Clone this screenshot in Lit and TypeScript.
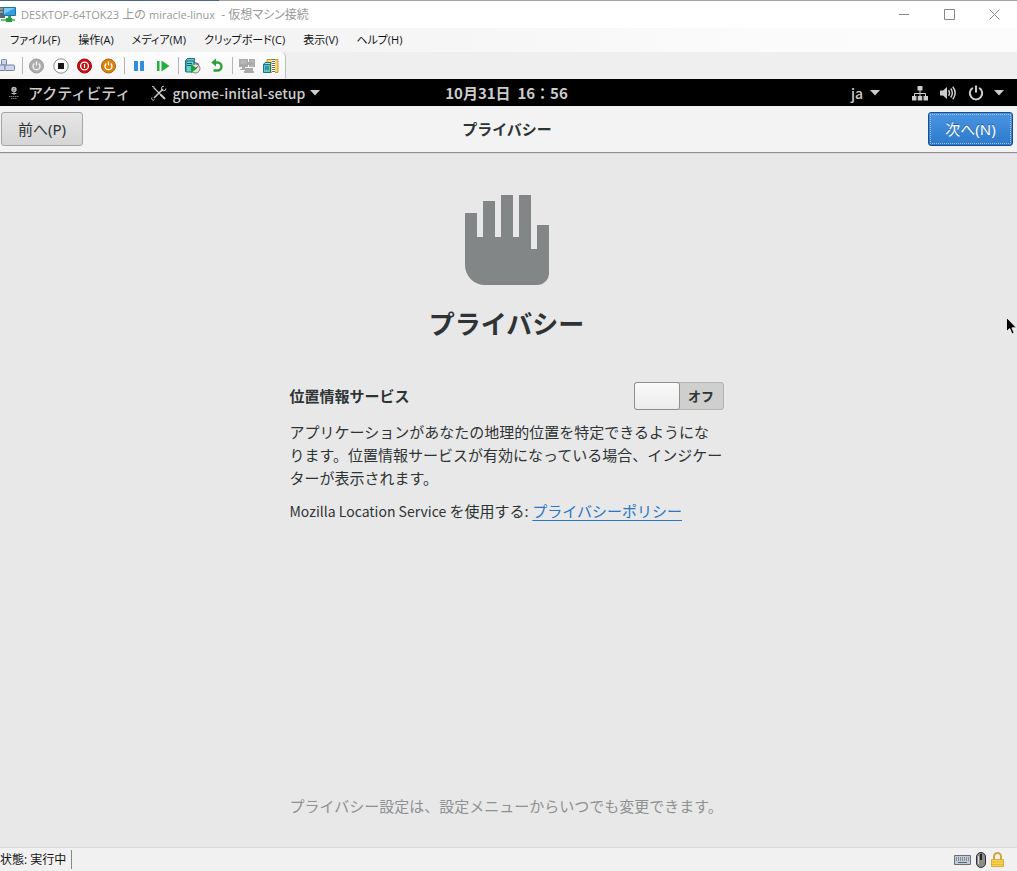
import { LitElement, html, css, svg } from "lit";
import { customElement, state } from "lit/decorators.js";

const caret = html`<svg class="caret" viewBox="0 0 10 6" width="10" height="6" aria-hidden="true"><path d="M0 0h10L5 5.5z" fill="currentColor"/></svg>`;

const icon = (body: unknown) =>
  html`<svg viewBox="0 0 16 16" width="16" height="16" aria-hidden="true">${body}</svg>`;

const icons = {
  keys: svg`<g fill="#cdd6ea" stroke="#7482a3"><rect x="1.500" y="1.500" width="5" height="5.500" rx="1"/><rect x="-1.500" y="7" width="6.500" height="5.500" rx="1"/><rect x="5" y="7" width="9.500" height="5.500" rx="1"/></g>`,
  start: svg`<circle cx="7.500" cy="8" r="7" fill="#adadad" stroke="#9b9b9b"/><path d="M5.300 5.500a3.500 3.500 0 1 0 4.400 0M7.500 3.500v4" fill="none" stroke="#f4f4f4" stroke-width="1.300"/>`,
  stop: svg`<circle cx="8" cy="8" r="7.200" fill="#fff" stroke="#8c8c8c"/><path d="M5 5h6v6H5z" fill="#161616"/>`,
  shut: svg`<circle cx="7.500" cy="8" r="7" fill="#c40f14" stroke="#9c0b0f"/><circle cx="7.500" cy="8" r="3.900" fill="none" stroke="#fff" stroke-width="1.300"/><path d="M7.500 6v4" stroke="#fff" stroke-width="1.200"/>`,
  save: svg`<circle cx="7.500" cy="8" r="7" fill="#dd8209" stroke="#a8640c"/><path d="M5.300 5.500a3.500 3.500 0 1 0 4.400 0M7.500 3.500v4" fill="none" stroke="#fff" stroke-width="1.300"/>`,
  pause: svg`<path d="M3 3h4v10H3zM9 3h4v10H9z" fill="#2f8ddb"/>`,
  resume: svg`<path d="M2 3h2.500v10H2zM6.500 2.500L14.500 8l-8 5.500z" fill="#22ae3c"/>`,
  checkpoint: svg`<path d="M.5 2.500l2-2h7v2l-1 11h-8z" fill="#5cc9d2" stroke="#21717d"/><path d="M1 3h8v11H1z" fill="#69d3da" stroke="#21717d"/><path d="M2 5.500h5M2 7.500h4" stroke="#14606c"/><circle cx="10.500" cy="10.500" r="4.500" fill="#e3e4de" stroke="#81847a"/><path d="M10 4.500l4 2" stroke="#666" stroke-width="1.300"/><path d="M6 6l6 4.500L6 15z" fill="#17a437"/><path d="M11 10l2.500-2" stroke="#555"/>`,
  revert: svg`<path d="M4 4.500h4.500a3.800 3.800 0 0 1 0 8H4.500" fill="none" stroke="#29a338" stroke-width="2.400"/><path d="M7 .5v8L2.200 4.500z" fill="#29a338"/>`,
  share: svg`<g fill="#a9a9a9"><path d="M0 1h9v8H0zM3 9h3v2H3zM1 11h7v1H1zM10 1h6v8h-6zM9 4h7v3H9zM6 10h8v3H6zM5 13h10v2H5z"/></g><path d="M1.500 3h6M1.500 5h6M11 3h4M11 8h4" stroke="#c4c4c4"/>`,
  session: svg`<path d="M4 1.500h11v13H4z" fill="#f5d66f" stroke="#c59b2e"/><path d="M10.500 1v14" stroke="#fff" stroke-width="3"/><path d="M10.500 1v14" stroke="#6c6c6c" stroke-width="3" stroke-dasharray="1 1"/><path d="M.5 6.500l1.500-2h6l-.5 2z" fill="#9be5ea" stroke="#21717d"/><path d="M.5 6.500h7v8h-7z" fill="#58c7d2" stroke="#21717d"/><path d="M2 9h4M2 11h4" stroke="#14606c"/>`,
};

const toolGroups: [string, keyof typeof icons][][] = [
  [["Ctrl+Alt+Del", "keys"]],
  [["起動", "start"], ["停止", "stop"], ["シャットダウン", "shut"], ["保存", "save"]],
  [["一時停止", "pause"], ["再開", "resume"]],
  [["チェックポイント", "checkpoint"], ["元に戻す", "revert"]],
  [["共有", "share"], ["拡張セッション", "session"]],
];

const menus = ["ファイル(F)", "操作(A)", "メディア(M)", "クリップボード(C)", "表示(V)", "ヘルプ(H)"];

@customElement("vm-chrome")
class VmChrome extends LitElement {
  static styles = css`
    :host { display: block; font: 12px/16px "Open Sans", "Noto Sans CJK JP", sans-serif; color: #111; background: #efefef; }
    button { border: 0; padding: 0; margin: 0; background: none; font: inherit; color: inherit; display: flex; align-items: center; justify-content: center; }
    .title { height: 28px; box-sizing: border-box; border-top: 1px solid #a0a0a0; border-image: linear-gradient(90deg, #4d6483 220px, #a0a0a0 220px) 1; background: #fff; display: flex; align-items: center; color: #999; }
    .logo { flex: none; margin-right: 4px; }
    .name { flex: 1; font-feature-settings: "palt"; white-space: nowrap; }
    .latin { font-size: 11px; }
    .win { width: 45px; height: 27px; color: #888; }
    .menu { height: 24px; display: flex; gap: 18px; padding-left: 10px; background: linear-gradient(90deg, #f0f0f0, #fcfcfc 860px); }
    .menu button { font-size: 11px; font-feature-settings: "palt"; white-space: nowrap; }
    .tools { width: max-content; height: 27px; display: flex; align-items: center; background: linear-gradient(#fdfdfd, #f5f5f5); border-right: 1px solid #bbb; border-radius: 0 5px 0 0; padding-right: 2px; }
    .tools button { width: 24px; height: 24px; }
    .tools .edge { width: 19px; justify-content: flex-start; }
    .group { display: flex; align-items: center; }
    .group + .group::before { content: ""; width: 1px; height: 17px; margin: 0 2px 0 3px; background: #b5b5b5; }
  `;
  render() {
    return html`
      <header class="title">
        <svg class="logo" viewBox="0 0 17 17" width="17" height="17" aria-hidden="true">
          <path d="M0 1h5v11H0z" fill="#5f6669"/><path d="M0 3h4M0 6h4" stroke="#c5d0d4"/>
          <path d="M3.500 1.500h12v8h-12z" fill="#2d9fe2" stroke="#287098"/><path d="M4 2h11L4 8z" fill="#79c9f2"/>
          <path d="M8 10h3v3H8z" fill="#2fa84a"/><path d="M1 13h14v2H1z" fill="#59cb70"/><path d="M6 12h6v4H6z" fill="#279b42"/>
        </svg>
        <span class="name"><span class="latin">DESKTOP-64TOK23</span> 上の <span class="latin">miracle-linux</span> &nbsp;- 仮想マシン接続</span>
        <button class="win" aria-label="最小化"><svg width="11" height="11"><path d="M0 5.500h10" stroke="currentColor"/></svg></button>
        <button class="win" aria-label="最大化"><svg width="11" height="11"><path d="M.5.5h10v10H.5z" fill="none" stroke="currentColor"/></svg></button>
        <button class="win" aria-label="閉じる"><svg width="11" height="11"><path d="M.5.5l10 10M10.500.5l-10 10" stroke="currentColor"/></svg></button>
      </header>
      <nav class="menu">${menus.map((m) => html`<button>${m}</button>`)}</nav>
      <div class="tools">
        ${toolGroups.map((g, i) => html`<div class="group">${g.map(([label, key]) => html`<button class=${i ? "" : "edge"} aria-label=${label}>${icon(icons[key])}</button>`)}</div>`)}
      </div>`;
  }
}

@customElement("shell-bar")
class ShellBar extends LitElement {
  static styles = css`
    :host { display: grid; grid-template-columns: 1fr auto 1fr; align-items: center; height: 27px; box-sizing: border-box; padding: 0 4px 0 0; background: #000; color: #ccc; font: 500 15px/24px "Noto Sans CJK JP", sans-serif; white-space: nowrap; }
    button { border: 0; padding: 0; margin: 0; background: none; font: inherit; color: inherit; display: flex; align-items: center; }
    svg { flex: none; }
    .left { display: flex; padding-left: 8px; gap: 21px; }
    .left .activities { gap: 8px; }
    .clock { font-weight: 700; }
    .left .app { gap: 5px; font-size: 14px; }
    .right { display: flex; justify-content: flex-end; padding-right: 9px; gap: 32px; }
    .right .lang { gap: 7px; font-size: 14px; }
    .right .system { gap: 12px; }
    .system .caret { margin-left: -2px; }
  `;
  render() {
    return html`
      <div class="left">
        <button class="activities">
          <svg viewBox="0 0 12 14" width="12" height="14" aria-hidden="true"><g fill="#bbb"><circle cx="6" cy="3.500" r="2.700"/><path d="M5.500 5h1v4h-1zM3.500 7h5v1h-5z"/></g><path d="M1 10.500h10M3 12.500h6" stroke="#777" stroke-dasharray="1.500 .5"/><path d="M5 3l2-1M5 5l2-1" stroke="#333" stroke-width=".6"/></svg>
          アクティビティ
        </button>
        <button class="app">
          <svg viewBox="0 0 16 16" width="16" height="16" aria-hidden="true"><path d="M2.500 2.500L10 10" stroke="#ccc" stroke-width="1.200"/><path d="M9.500 9.500l4.500 4.500" stroke="#ccc" stroke-width="2"/><path d="M12 4L3 13" stroke="#ccc" stroke-width="1.600"/><path d="M13 1.200a2.300 2.300 0 1 0 2 2.300M1 12.500a1.500 1.500 0 1 0 2.500 2M1 1.500l2.500.5" fill="none" stroke="#ccc"/></svg>
          gnome-initial-setup ${caret}
        </button>
      </div>
      <button class="clock">10月31日&nbsp; 16：56</button>
      <div class="right">
        <button class="lang">ja ${caret}</button>
        <button class="system" aria-label="システム">
          <svg viewBox="0 0 16 16" width="16" height="16" aria-hidden="true"><path d="M5.500 1h5v5h-5zM0 11h5v4.500H0zM5.500 11h5v4.500h-5zM11 11h5v4.500h-5z" fill="#000"/><path d="M5.500 1h5v4.500h-5zM0 11h4.500v4.500H0zM5.750 11h4.500v4.500h-4.500zM11.500 11H16v4.500h-4.500z" fill="#ccc"/><path d="M8 5v6M2.500 11V8.500h11V11" fill="none" stroke="#ccc"/></svg>
          <svg viewBox="0 0 16 16" width="16" height="16" aria-hidden="true"><path d="M0 5.500h3L7 2v12l-4-3.500H0z" fill="#ccc"/><path d="M8.500 5.300q2 2.700 0 5.400M10.700 3.500q3.300 4.500 0 9M12.800 1.800q4.700 6.200 0 12.400" fill="none" stroke="#ccc" stroke-width="1.500"/></svg>
          <svg viewBox="0 0 16 16" width="16" height="16" aria-hidden="true"><path d="M4.800 2.900a6.200 6.200 0 1 0 6.400 0M8 .5v7" fill="none" stroke="#ccc" stroke-width="2"/></svg>
          ${caret}
        </button>
      </div>`;
  }
}

@customElement("privacy-page")
class PrivacyPage extends LitElement {
  @state() private on = false;
  static styles = css`
    :host { display: flex; flex-direction: column; background: #e8e8e8; color: #2e3436; font: 15px/23px "Noto Sans", "Noto Sans CJK JP", sans-serif; }
    .bar { display: grid; grid-template-columns: 1fr auto 1fr; align-items: center; height: 47px; box-sizing: border-box; padding: 0 4px 0 1px; background: #f3f3f3; border-bottom: 1px solid #8f8f8f; box-shadow: 0 1px 0 #d8d8d8; }
    .bar h2 { margin: 0; font-size: 15px; font-weight: 700; line-height: 23px; }
    .nav { box-sizing: border-box; height: 34px; min-width: 82px; padding: 0 16px; border-radius: 3px; border: 1px solid #a5a5a5; background: linear-gradient(#e6e6e6, #d6d6d6); color: #2e3436; font: inherit; justify-self: start; }
    .nav.next { justify-self: end; min-width: 85px; color: #fff; border-color: #184f8c; background: linear-gradient(#4a94e2, #2d7acb); outline: 1px dotted #9dc3ea; outline-offset: -3px; text-shadow: 0 -1px #2460a0; }
    main { flex: 1; display: flex; flex-direction: column; align-items: center; padding: 42px 20px 29px 16px; }
    h1 { margin: 20px 0 39px; font-size: 26px; line-height: 38px; font-weight: 700; }
    .body { width: 434px; max-width: 100%; }
    .row { display: flex; justify-content: space-between; align-items: center; height: 28px; }
    .row label { font-weight: 700; }
    .switch { appearance: none; box-sizing: border-box; margin: 0; width: 90px; height: 28px; border: 1px solid #b4b4b2; border-radius: 3px; background: #cfcfcd; display: flex; align-items: center; font: 700 13px/20px "Noto Sans", "Noto Sans CJK JP", sans-serif; color: #2e3436; }
    .switch::before { content: ""; box-sizing: border-box; width: 46px; height: 28px; margin: -1px 0 -1px -1px; border: 1px solid #8f8f8f; border-radius: 3px; background: linear-gradient(#fafafa, #ececec); flex: none; }
    .switch::after { content: "オフ"; flex: 1; text-align: center; }
    .switch:checked { background: #4a90d9; flex-direction: row-reverse; }
    .switch:checked::after { content: "オン"; color: #fff; }
    p { margin: 11px 0 10px; white-space: nowrap; }
    p + p { margin: 0; }
    .latin { font-family: "Noto Sans CJK JP", sans-serif; font-size: 14px; }
    a { color: #2a76c6; text-decoration: underline; text-underline-offset: 3px; text-decoration-thickness: 1px; }
    .hint { margin-top: auto; width: 434px; max-width: 100%; color: #8e9192; white-space: nowrap; }
  `;
  render() {
    return html`
      <div class="bar">
        <button class="nav">前へ(P)</button>
        <h2>プライバシー</h2>
        <button class="nav next">次へ(N)</button>
      </div>
      <main>
        <svg viewBox="0 0 84 90" width="84" height="90" aria-hidden="true"><path d="M0 18h12v24h6V6h12v36h6V0h12v42h6V0h12v54h6V30h12v48a12 12 0 0 1-12 12H20A20 20 0 0 1 0 70z" fill="#828686"/></svg>
        <h1>プライバシー</h1>
        <section class="body">
          <div class="row">
            <label for="location">位置情報サービス</label>
            <input id="location" class="switch" type="checkbox" role="switch" .checked=${this.on} @change=${() => (this.on = !this.on)} />
          </div>
          <p>アプリケーションがあなたの地理的位置を特定できるようにな<br />ります。位置情報サービスが有効になっている場合、インジケー<br />ターが表示されます。</p>
          <p><span class="latin">Mozilla Location Service </span>を使用する: <a href="#">プライバシーポリシー</a></p>
        </section>
        <div class="hint">プライバシー設定は、設定メニューからいつでも変更できます。</div>
      </main>`;
  }
}

@customElement("app-root")
class AppRoot extends LitElement {
  static styles = css`
    :host { display: flex; flex-direction: column; min-height: 100vh; }
    privacy-page { flex: 1; }
    .status { height: 24px; box-sizing: border-box; display: flex; align-items: center; justify-content: space-between; border-top: 1px solid #d9d9d9; background: #f1f1f1; font: 12px/16px "Open Sans", "Noto Sans CJK JP", sans-serif; color: #111; }
    .state { border-right: 1px solid #888; padding-right: 5px; line-height: 19px; }
    .tray { display: flex; align-items: center; gap: 4px; padding-right: 13px; }
    .cursor { position: absolute; left: calc(100% - 11px); top: 317px; }
  `;
  render() {
    return html`
      <vm-chrome></vm-chrome>
      <shell-bar></shell-bar>
      <privacy-page></privacy-page>
      <footer class="status">
        <span class="state">状態: 実行中</span>
        <span class="tray">
          <svg viewBox="0 0 17 10" width="17" height="10" aria-hidden="true"><path d="M.5.5h16v9H.5z" fill="#c3ccd6" stroke="#64707c"/><path d="M2 3h13M2 5h13" stroke="#4b5662" stroke-dasharray="1 1"/><path d="M4 7.500h9" stroke="#5b6672"/></svg>
          <svg viewBox="0 0 12 16" width="12" height="16" aria-hidden="true"><rect x="1.500" y=".5" width="9" height="15" rx="4.500" fill="#8d8d8d" stroke="#303030"/><path d="M6 2v6" stroke="#222" stroke-width="2"/><path d="M3.500 4v8" stroke="#d8d8d8"/></svg>
          <svg viewBox="0 0 13 16" width="13" height="16" aria-hidden="true"><path d="M3 8V4.500a3.500 3.500 0 0 1 7 0V8" fill="none" stroke="#cda43e" stroke-width="2"/><path d="M.5 7.500h12v7H.5z" fill="#f8d352" stroke="#d9ae36"/><path d="M1 10h11M1 12.500h11" stroke="#e5b93b"/></svg>
        </span>
      </footer>
      <svg class="cursor" viewBox="0 0 11 18" width="11" height="18" aria-hidden="true"><path d="M.5.500v14l3.200-3 2.300 5.500 2.200-1-2.300-5.200h4.500z" fill="#000" stroke="#fff" stroke-width=".8"/></svg>`;
  }
}
